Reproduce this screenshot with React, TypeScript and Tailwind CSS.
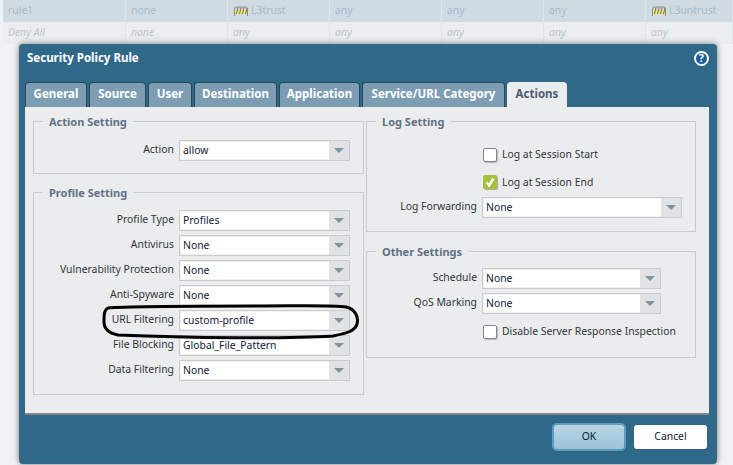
import { ReactNode } from "react";

const font = "font-['Noto_Sans',sans-serif]";

function ZoneIcon() {
  return (
    <svg width="16" height="14" viewBox="0 0 16 14" className="shrink-0">
      <path d="M1.5 12V5Q1.5 3 3 3h10q1.500 0 1.500 2v7" fill="none" stroke="#8f8c78" strokeWidth="1" />
      <rect x="2" y="6" width="12" height="4" fill="#f2e06a" />
      <path d="M5 3.500 3.500 10M8 3.500 6.500 10M11 3.500 9.500 10M14 4 12.500 10" stroke="#77745f" strokeWidth="1" />
    </svg>
  );
}

function Cell({ w, children, italic }: { w: string; children: ReactNode; italic?: boolean }) {
  return (
    <div className={`${w} flex h-full items-center gap-[2px] border-r border-[#dfe5ea] pl-[5px] ${italic ? "italic text-[#bcc3c9]" : "text-[#a3bccd]"}`}>
      {children}
    </div>
  );
}

function Row({ cells, italic, bg }: { cells: ReactNode[]; italic?: boolean; bg: string }) {
  const widths = ["w-[123px]", "w-[102px]", "w-[102px]", "w-[112px]", "w-[102px]", "w-[102px]", "flex-1"];
  return (
    <div className={`flex h-[22px] text-[10.4px] ${bg}`}>
      {cells.map((c, i) => (
        <Cell key={i} w={widths[i]} italic={italic}>
          {c}
        </Cell>
      ))}
    </div>
  );
}

function Select({ value, w, className = "" }: { value: string; w: string; className?: string }) {
  return (
    <div className={`${w} flex h-[21px] border border-[#c9cbcd] bg-white shadow-[inset_0_0_0_1px_#f1f1f1] ${className}`}>
      <div className="flex-1 pl-[3px] text-[10.4px] leading-[19px] text-[#10203a]">{value}</div>
      <div className="flex w-[20px] items-center justify-center bg-[#e1e2e4]">
        <div className="h-0 w-0 border-x-[5px] border-t-[5px] border-x-transparent border-t-[#7f93a3]" />
      </div>
    </div>
  );
}

function Field({ label, value, labelW = "w-[135px]", selectW = "w-[171px]" }: { label: string; value: string; labelW?: string; selectW?: string }) {
  return (
    <div className="flex h-[21px] items-center gap-[5px]">
      <div className={`${labelW} pb-[1px] text-right text-[10.4px] text-[#30353c]`}>{label}</div>
      <Select value={value} w={selectW} />
    </div>
  );
}

function Group({ title, className, children }: { title: string; className: string; children: ReactNode }) {
  return (
    <div className={`relative border border-[#c8cacc] ${className}`}>
      <div className="absolute left-[9px] top-[-8px] bg-[#ebecee] px-[6px] text-[11px] leading-[15px] font-bold text-[#5f7287]">
        {title}
      </div>
      {children}
    </div>
  );
}

function Check({ label, checked }: { label: string; checked?: boolean }) {
  return (
    <div className="flex items-center gap-[5px] pl-[116px] text-[10.4px] text-[#30353c]">
      {checked ? (
        <div className="flex h-[14px] w-[14px] items-center justify-center rounded-[2px] bg-[#a3c13b] shadow-[1px_1px_1px_#aaa]">
          <svg width="12" height="12" viewBox="0 0 12 12">
            <path d="M2.500 6.500 5 9.500 9.500 2.500" fill="none" stroke="#fff" strokeWidth="2.400" />
          </svg>
        </div>
      ) : (
        <div className="h-[14px] w-[14px] rounded-[2px] border border-[#7d8a96] bg-white shadow-[1px_1px_1px_#bbb]" />
      )}
      {label}
    </div>
  );
}

const tabs = ["General", "Source", "User", "Destination", "Application", "Service/URL Category"];
const tabWidths = ["w-[62px]", "w-[57px]", "w-[44px]", "w-[83px]", "w-[81px]", "w-[143px]"];

export default function App() {
  const zone = (name: string) => (
    <>
      <ZoneIcon />
      {name}
    </>
  );

  return (
    <div className={`${font} relative h-[465px] w-[733px] overflow-hidden bg-[#f1f2f4] pl-[3px]`}>
      <Row bg="bg-[#d0dae3]" cells={["rule1", "none", zone("L3trust"), "any", "any", "any", zone("L3untrust")]} />
      <Row bg="bg-[#ebeef1]" italic cells={["Deny All", "none", "any", "any", "any", "any", "any"]} />

      {/* dialog */}
      <div className="absolute left-[19px] top-[44px] flex h-[420px] w-[698px] flex-col rounded-[4px] bg-[#306987] px-[6px] shadow-[0_0_6px_#777]">
        <div className="flex h-[38px] shrink-0 items-center justify-between pb-[10px] pl-[2px] pr-[2px]">
          <div className="text-[11.5px] font-bold text-white">Security Policy Rule</div>
          <div className="flex h-[15px] w-[15px] items-center justify-center rounded-full border-2 border-white bg-[#1c5f9c] text-[10px] leading-none font-bold text-white">
            ?
          </div>
        </div>

        <div className="flex h-[25px] shrink-0 gap-[2px]">
          {tabs.map((t, i) => (
            <div
              key={t}
              className={`${tabWidths[i]} rounded-t-[4px] border-x border-t border-[#26485c] bg-[#7d9db3] pt-[2px] text-center text-[11.5px] font-bold text-white`}
            >
              {t}
            </div>
          ))}
          <div className="w-[60px] rounded-t-[4px] bg-[#ebecee] pt-[3px] text-center text-[11.5px] font-bold text-[#4d5c6e]">
            Actions
          </div>
        </div>

        <div className="flex h-[308px] w-[684px] shrink-0 gap-[2px] border-b-2 border-[#85868a] bg-[#ebecee] pl-[8px] pt-[14px]">
          <div className="flex w-[331px] flex-col gap-[18px]">
            <Group title="Action Setting" className="h-[53px] pl-[5px] pt-[18px]">
              <Field label="Action" value="allow" />
            </Group>
            <Group title="Profile Setting" className="flex h-[203px] flex-col gap-[4px] pl-[5px] pt-[17px]">
              <Field label="Profile Type" value="Profiles" />
              <Field label="Antivirus" value="None" />
              <Field label="Vulnerability Protection" value="None" />
              <Field label="Anti-Spyware" value="None" />
              <Field label="URL Filtering" value="custom-profile" />
              <Field label="File Blocking" value="Global_File_Pattern" />
              <Field label="Data Filtering" value="None" />
            </Group>
          </div>
          <div className="flex w-[330px] flex-col gap-[19px]">
            <Group title="Log Setting" className="flex h-[111px] flex-col pt-[25px]">
              <Check label="Log at Session Start" />
              <div className="h-[12px]" />
              <Check label="Log at Session End" checked />
              <div className="mt-[7px] pl-[5px]">
                <Field label="Log Forwarding" value="None" labelW="w-[105px]" selectW="w-[200px]" />
              </div>
            </Group>
            <Group title="Other Settings" className="flex h-[107px] flex-col gap-[4px] pl-[5px] pt-[16px]">
              <Field label="Schedule" value="None" labelW="w-[105px]" selectW="w-[179px]" />
              <Field label="QoS Marking" value="None" labelW="w-[105px]" selectW="w-[179px]" />
              <div className="mt-[6px] -ml-[5px]">
                <Check label="Disable Server Response Inspection" />
              </div>
            </Group>
          </div>
        </div>

        <div className="flex flex-1 items-start justify-end gap-[8px] pr-[4px] pt-[8px] text-[10.4px] text-[#10203a]">
          <div className="flex h-[28px] w-[74px] items-center justify-center rounded-[5px] border-2 border-[#5d9dbd] bg-[linear-gradient(#b9d5e4,#9cc3d8)]">
            OK
          </div>
          <div className="mt-[2px] flex h-[24px] w-[73px] items-center justify-center rounded-[3px] bg-white">Cancel</div>
        </div>
      </div>

      {/* hand drawn highlight */}
      <svg width="270" height="48" viewBox="0 0 270 48" className="absolute left-[98px] top-[300px]">
        <path
          d="M10 8C30 6 100 6 160 6 200 6 235 5 248 7 257 9 261 17 259 24 257 31 250 33 235 36 190 39 90 38 20 35 10 33 6 28 6 22 6 15 6 10 10 8Z"
          fill="none"
          stroke="#000"
          strokeWidth="3"
        />
      </svg>
    </div>
  );
}
